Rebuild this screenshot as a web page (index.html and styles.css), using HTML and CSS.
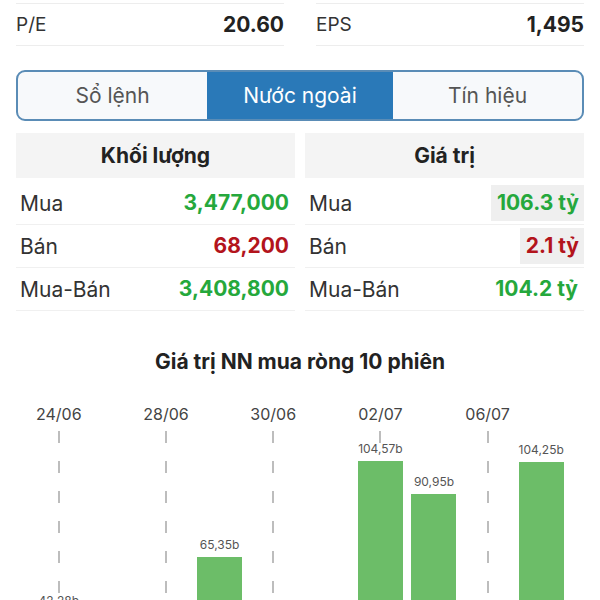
FILE: index.html
```html
<!DOCTYPE html>
<html lang="vi">
<head>
    <meta charset="UTF-8">
    <meta name="viewport" content="width=device-width, initial-scale=1.0">
    <title>Nước ngoài</title>
    <link rel="stylesheet" href="styles.css">
</head>
<body>

    <div class="stats">
        <div class="stat"><span>P/E</span><b>20.60</b></div>
        <div class="stat"><span>EPS</span><b>1,495</b></div>
    </div>

    <div class="tabs">
        <div class="tab">Sổ lệnh</div>
        <div class="tab active">Nước ngoài</div>
        <div class="tab">Tín hiệu</div>
    </div>

    <div class="flows">
        <div class="flow">
            <div class="flow-head">Khối lượng</div>
            <div class="flow-row"><span>Mua</span><span class="val up">3,477,000</span></div>
            <div class="flow-row"><span>Bán</span><span class="val down">68,200</span></div>
            <div class="flow-row"><span>Mua-Bán</span><span class="val up">3,408,800</span></div>
        </div>
        <div class="flow">
            <div class="flow-head">Giá trị</div>
            <div class="flow-row"><span>Mua</span><span class="val up shade">106.3 tỷ</span></div>
            <div class="flow-row"><span>Bán</span><span class="val down shade">2.1 tỷ</span></div>
            <div class="flow-row"><span>Mua-Bán</span><span class="val up">104.2 tỷ</span></div>
        </div>
    </div>

    <h2 class="chart-title">Giá trị NN mua ròng 10 phiên</h2>

    <!-- cột: 2.45px cho mỗi tỷ, đáy ở ngoài khung -->
    <div class="chart">
        <div class="col tick"><div class="date">24/06</div><div class="plot"><div class="bar-label">42,28b</div><div class="bar" style="height:104px"></div></div></div>
        <div class="col"><div class="date"></div><div class="plot"></div></div>
        <div class="col tick"><div class="date">28/06</div><div class="plot"></div></div>
        <div class="col"><div class="date"></div><div class="plot"><div class="bar-label">65,35b</div><div class="bar" style="height:160px"></div></div></div>
        <div class="col tick"><div class="date">30/06</div><div class="plot"></div></div>
        <div class="col"><div class="date"></div><div class="plot"></div></div>
        <div class="col tick"><div class="date">02/07</div><div class="plot"><div class="bar-label">104,57b</div><div class="bar" style="height:256px"></div></div></div>
        <div class="col"><div class="date"></div><div class="plot"><div class="bar-label">90,95b</div><div class="bar" style="height:223px"></div></div></div>
        <div class="col tick"><div class="date">06/07</div><div class="plot"></div></div>
        <div class="col"><div class="date"></div><div class="plot"><div class="bar-label">104,25b</div><div class="bar" style="height:255px"></div></div></div>
    </div>

</body>
</html>
```

FILE: styles.css
```css
html {
    overflow: hidden;
}
body {
    background-color: #ffffff;
    color: #222;
    font-family: Inter, 'Noto Sans', sans-serif;
    margin: 0;
    padding: 0 16px;
}

/* chỉ số P/E, EPS */
.stats {
    display: grid;
    grid-template-columns: 1fr 1fr;
    gap: 32px;
    margin-top: 3px;
}
.stat {
    display: flex;
    justify-content: space-between;
    align-items: center;
    height: 41px;
    border-top: 1px solid #ededed;
    border-bottom: 1px solid #ededed;
    font-size: 19px;
    color: #333;
}
.stat b {
    font-weight: 700;
    font-size: 21px;
    color: #222;
}

/* tabs */
.tabs {
    display: grid;
    grid-template-columns: 189px 186px 1fr;
    margin-top: 24px;
    height: 47px;
    border: 2px solid #5a8cb6;
    border-radius: 9px;
    overflow: hidden;
    background-color: #f7f9fb;
}
.tab {
    display: flex;
    align-items: center;
    justify-content: center;
    font-size: 21px;
    color: #555;
}
.tab.active {
    background-color: #2a79b8;
    color: #ffffff;
}

/* bảng khối lượng / giá trị */
.flows {
    display: grid;
    grid-template-columns: 1fr 1fr;
    gap: 10px;
    margin-top: 12px;
}
.flow-head {
    background-color: #f4f4f4;
    height: 45px;
    line-height: 45px;
    text-align: center;
    font-weight: 700;
    font-size: 21px;
    color: #222;
    margin-bottom: 4px;
}
.flow-row {
    display: flex;
    justify-content: space-between;
    align-items: center;
    height: 42px;
    border-bottom: 1px solid #f0f0f0;
    padding-left: 4px;
    font-size: 21px;
    color: #333;
}
.val {
    font-weight: 700;
    padding: 0 6px;
    height: 36px;
    line-height: 36px;
}
.val.shade {
    background-color: #efefef;
    padding-right: 5px;
}
.up {
    color: #25a83c;
}
.down {
    color: #b3141c;
}

/* biểu đồ */
.chart-title {
    text-align: center;
    font-size: 21px;
    font-weight: 700;
    line-height: 24px;
    margin: 39px 0 0;
    color: #222;
}
.chart {
    display: grid;
    grid-template-columns: repeat(10, 1fr);
    margin: 28px 16px 0;
}
.col {
    display: flex;
    flex-direction: column;
}
.date {
    height: 24px;
    line-height: 24px;
    margin-bottom: 5px;
    text-align: center;
    font-size: 16px;
    color: #444;
    white-space: nowrap;
}
.plot {
    position: relative;
    height: 286px;
    display: flex;
    flex-direction: column;
    justify-content: flex-end;
    align-items: center;
}
.col.tick .plot::before {
    content: "";
    position: absolute;
    top: 0;
    bottom: 0;
    left: calc(50% - 1px);
    width: 2px;
    background: repeating-linear-gradient(to bottom, #bdbdbd 0 12px, transparent 12px 30px);
}
.bar-label {
    position: relative;
    font-size: 12px;
    line-height: 13px;
    color: #555;
    margin-bottom: 6px;
    white-space: nowrap;
}
.bar {
    position: relative;
    width: 45px;
    background-color: #6cbd68;
}
```
